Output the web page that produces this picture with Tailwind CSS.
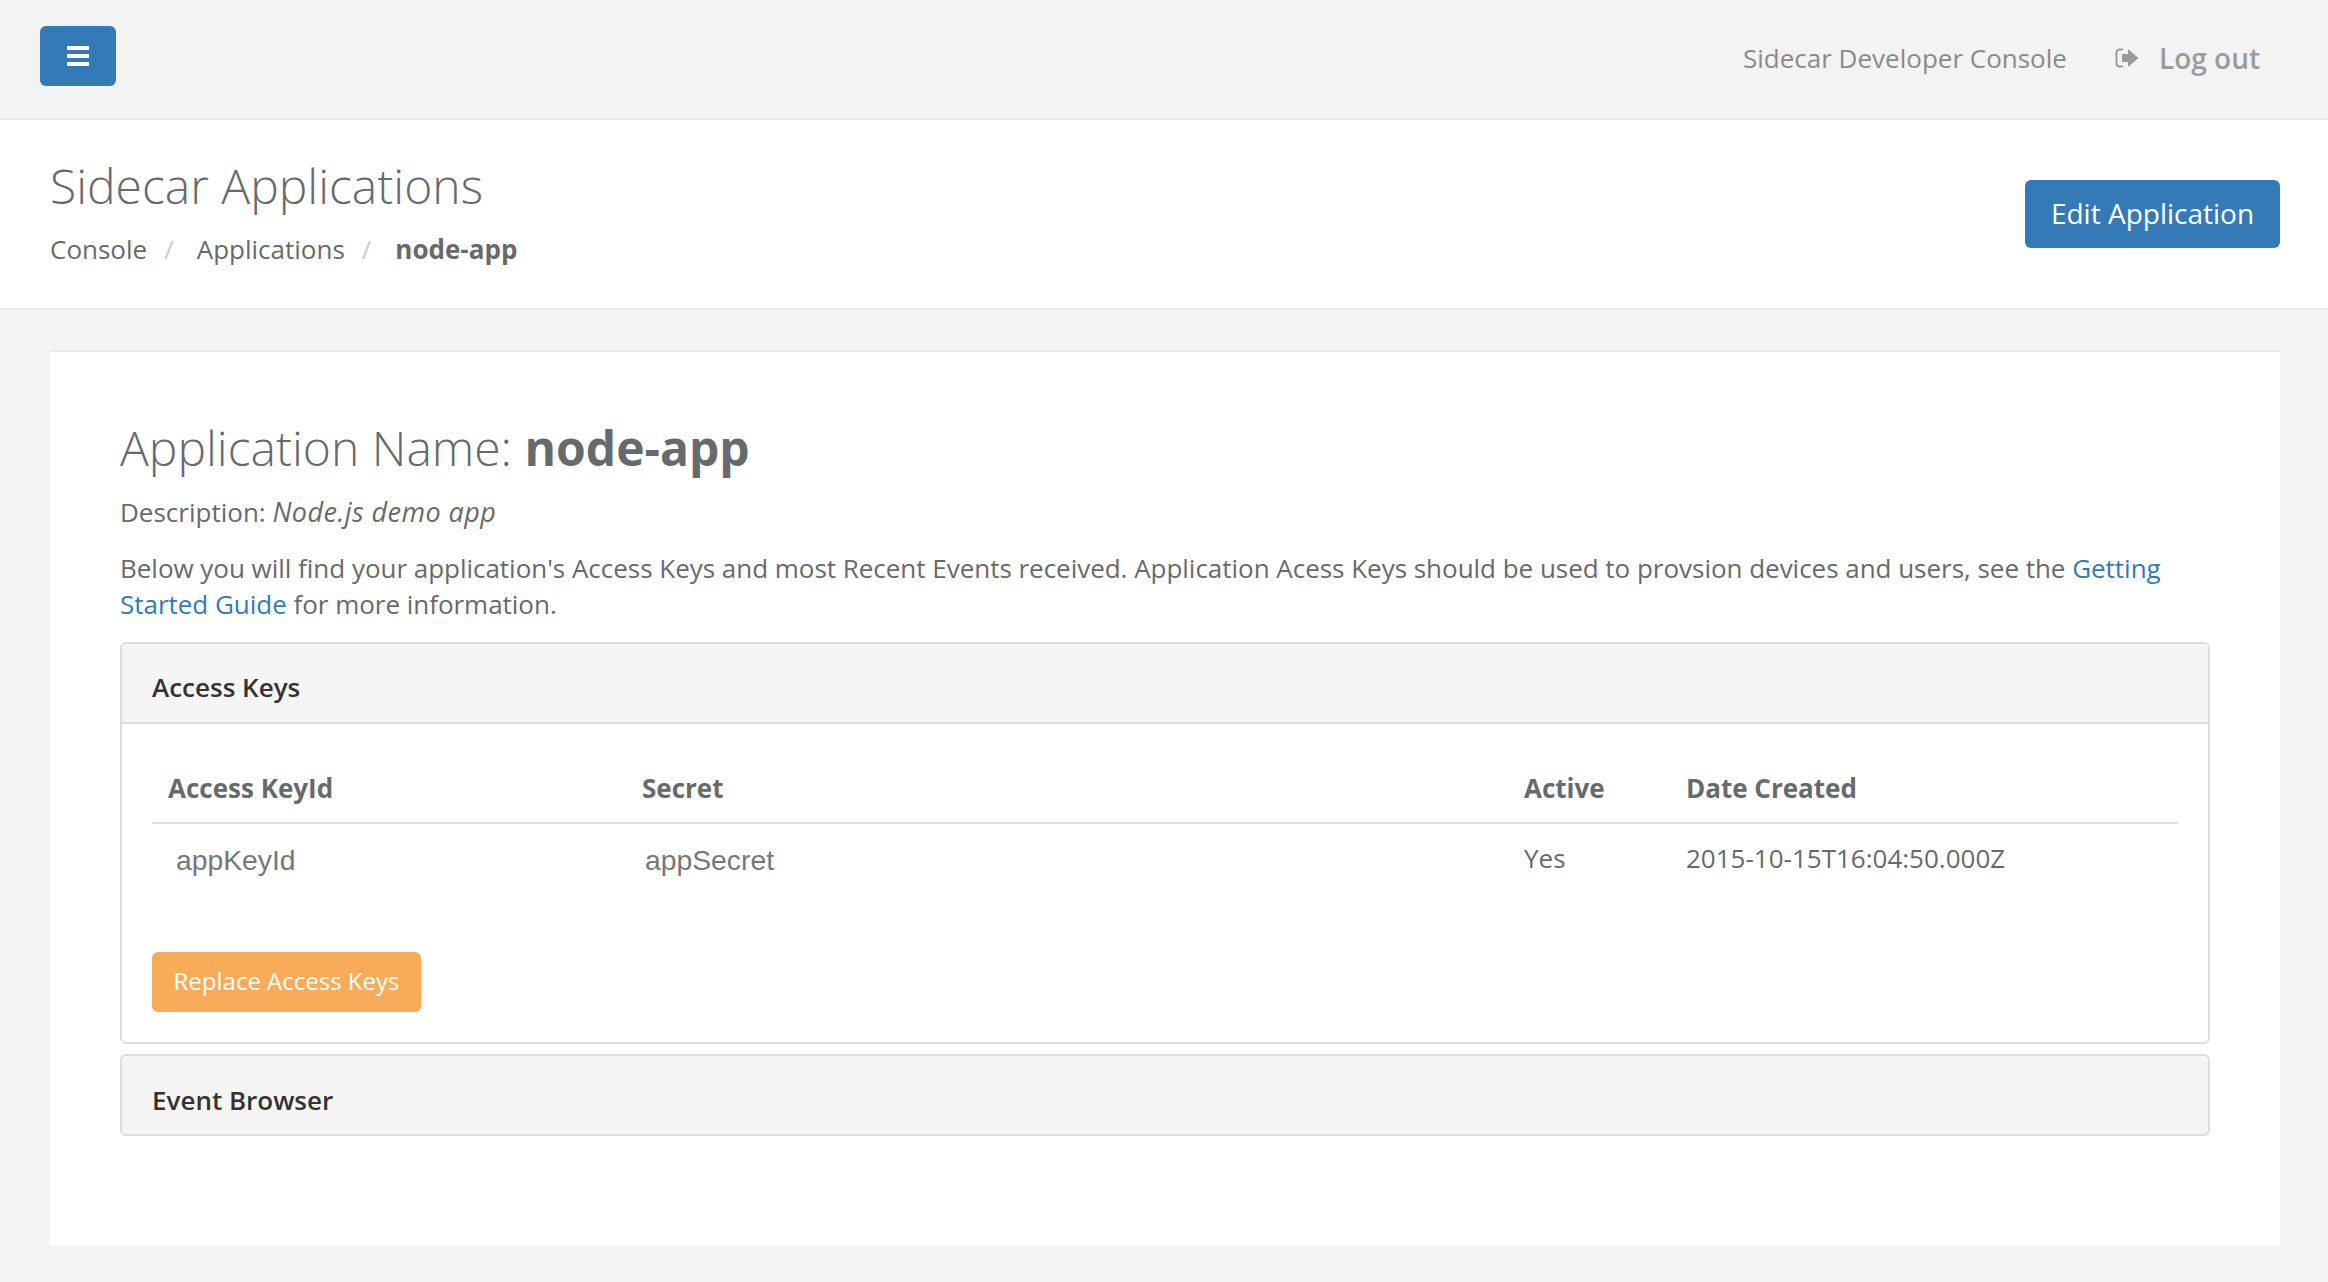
<!DOCTYPE html>
<html><head><meta charset="utf-8"><script src="https://cdn.jsdelivr.net/npm/@tailwindcss/browser@4"></script></head>
<body class="bg-[#f3f3f4] text-[#676a6c] font-['Open_Sans',sans-serif] text-[26px] leading-[36px] h-[1282px] overflow-hidden">
<header class="h-[120px] border-b-2 border-[#e7eaec] flex items-start justify-between pl-[40px] pr-[68px]">
  <button class="mt-[26px] w-[76px] h-[60px] rounded-[6px] bg-[#337ab7] flex items-center justify-center">
    <svg width="22" height="20" viewBox="0 0 22 20" fill="#fff"><rect y="0" width="22" height="4"/><rect y="8" width="22" height="4"/><rect y="16" width="22" height="4"/></svg>
  </button>
  <div class="flex items-center h-[116px] gap-[48px]">
    <span class="text-[#8a8a8a]">Sidecar Developer Console</span>
    <span class="flex items-center gap-[20px] text-[#999c9e] font-semibold">
      <svg width="24" height="20" viewBox="0 0 24 20"><path d="M8 1.500H4.500A3 3 0 0 0 1.500 4.500V15.500A3 3 0 0 0 4.500 18.500H8" fill="none" stroke="#999c9e" stroke-width="2"/><path d="M7 6H13V1L23.500 10L13 19V14H7Z" fill="#999c9e"/></svg>
      <span class="text-[28px]">Log out</span>
    </span>
  </div>
</header>
<section class="h-[190px] bg-white border-b-2 border-[#e7eaec] flex justify-between pl-[50px] pr-[48px]">
  <div>
    <h2 class="text-[48px] leading-[53px] font-light mt-[39px]">Sidecar Applications</h2>
    <nav class="flex items-center mt-[19px] text-[26px] leading-[36px]">
      <span>Console</span><span class="text-[#ccc] pl-[17px] pr-[23px]">/</span><span>Applications</span><span class="text-[#ccc] pl-[17px] pr-[24px]">/</span><b class="font-bold">node-app</b>
    </nav>
  </div>
  <button class="mt-[60px] h-[68px] w-[255px] pb-[2px] rounded-[6px] bg-[#337ab7] text-white text-[28px]">Edit Application</button>
</section>
<main class="ml-[50px] mr-[48px] mt-[40px] h-[896px] bg-white border-t-2 border-[#e7eaec] px-[70px] pt-[66px]">
  <h1 class="text-[48px] leading-[60px] font-light">Application Name: <b class="font-bold">node-app</b></h1>
  <p class="mt-[16px]">Description: <i class="text-[27px] tracking-[0.45px]">Node.js demo app</i></p>
  <p class="mt-[20px] tracking-[-0.025px]">Below you will find your application's Access Keys and most Recent Events received. Application Acess Keys should be used to provsion devices and users, see the <a class="text-[#337ab7]">Getting Started Guide</a> for more information.</p>
  <div class="mt-[20px] border-2 border-[#ddd] rounded-[6px] h-[402px]">
    <div class="h-[78px] bg-[#f5f5f5] border-b-2 border-[#ddd] rounded-t-[4px] box-content pl-[30px] flex items-center text-[#333] font-semibold"><span class="mt-[8px]">Access Keys</span></div>
    <div class="px-[30px] pt-[45px]">
      <table class="w-full table-fixed border-collapse">
        <thead><tr class="border-b-2 border-[#ddd] text-left font-bold h-[54px]">
          <th class="w-[474px] pl-[16px] pb-[16px]">Access KeyId</th><th class="w-[881px] pl-[16px] pb-[16px]">Secret</th><th class="w-[163px] pl-[17px] pb-[16px]">Active</th><th class="pl-[16px] pb-[16px]">Date Created</th>
        </tr></thead>
        <tbody><tr class="h-[70px]">
          <td class="pl-[24px] pt-[2px] font-['Liberation_Sans',sans-serif] text-[28.3px] text-[#777]">appKeyId</td><td class="pl-[19px] pt-[2px] font-['Liberation_Sans',sans-serif] text-[28.3px] text-[#777]">appSecret</td><td class="pl-[17px] pb-[2px]">Yes</td><td class="pl-[16px] pb-[2px]">2015-10-15T16:04:50.000Z</td>
        </tr></tbody>
      </table>
      <button class="mt-[59px] w-[269px] h-[60px] pb-[2px] rounded-[6px] bg-[#f8ac59] text-white text-[24px]">Replace Access Keys</button>
    </div>
  </div>
  <div class="mt-[10px] border-2 border-[#ddd] rounded-[6px] bg-[#f5f5f5] h-[82px] pl-[30px] flex items-center text-[#333] font-semibold"><span class="mt-[10px]">Event Browser</span></div>
</main>
</body></html>
